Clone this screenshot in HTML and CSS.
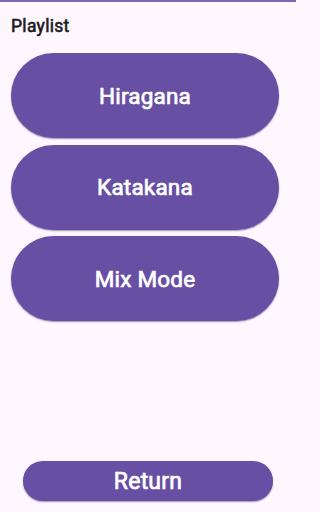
FILE: index.html
```html
<!DOCTYPE html>
<html>
<head>
<meta charset="utf-8">
<link rel="stylesheet" href="styles.css">
</head>
<body>
<div class="screen">
  <div class="topline"></div>
  <div class="title">Playlist</div>
  <div class="list">
    <button class="pill big">Hiragana</button>
    <button class="pill big">Katakana</button>
    <button class="pill big">Mix Mode</button>
  </div>
  <div class="footer">
    <button class="pill small">Return</button>
  </div>
</div>
</body>
</html>
```
FILE: styles.css
```css
html, body {
  margin: 0;
  padding: 0;
  background: #fef7ff;
}
.screen {
  width: 296px;
  height: 512px;
  display: flex;
  flex-direction: column;
  font-family: Roboto, "Noto Sans", sans-serif;
  overflow: hidden;
}
.topline {
  height: 2px;
  background: #7a68b3;
  flex: none;
}
.title {
  padding: 13.5px 0 0 11px;
  font-size: 17.5px;
  line-height: 20px;
  font-weight: 400;
  -webkit-text-stroke: 0.6px #1d1b20;
  color: #1d1b20;
  letter-spacing: 0.3px;
}
.list {
  margin-top: 17.5px;
  padding: 0 17px 0 11px;
  display: flex;
  flex-direction: column;
  gap: 6.5px;
}
.pill {
  border: none;
  background: #6750a4;
  color: #ffffff;
  font-family: Roboto, "Noto Sans", sans-serif;
  font-weight: 400;
  -webkit-text-stroke: 0.7px #ffffff;
  letter-spacing: 0.2px;
  display: flex;
  align-items: center;
  justify-content: center;
  padding: 0;
  box-shadow: 0 1px 1.5px rgba(40, 20, 90, 0.45);
}
.big {
  height: 85px;
  border-radius: 42.5px;
  font-size: 22.5px;
  width: 268px;
}
.footer {
  margin-top: auto;
  padding-bottom: 11px;
  display: flex;
  justify-content: center;
}
.small {
  width: 250px;
  height: 40px;
  border-radius: 20px;
  font-size: 23px;
}
```
